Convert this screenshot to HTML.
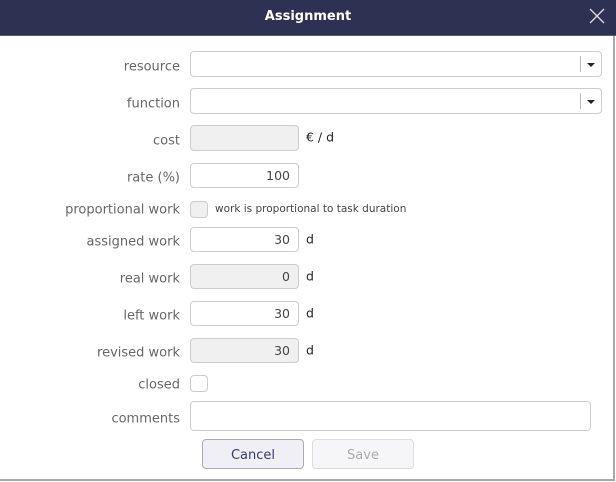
<!DOCTYPE html>
<html><head><style>
body{margin:0;width:616px;height:482px;background:#fff;font-family:"DejaVu Sans","Liberation Sans",sans-serif;position:relative;overflow:hidden}
.hdr{position:absolute;left:0;top:0;width:616px;height:35px;background:#2f3152;border-bottom:1px solid #5a5c78;}
.hdr .t{position:absolute;left:0;right:0;top:9px;text-align:center;color:#fff;font-weight:bold;font-size:13px}
.frame{position:absolute;left:0;top:36px;width:613px;height:443px;border-right:2px solid #a9a9a9;border-bottom:2px solid #a9a9a9}
.lbl{position:absolute;right:436px;font-size:13px;color:#666;white-space:nowrap;transform:translateY(-50%);margin-top:1px}
.in{position:absolute;box-sizing:border-box;border:1px solid #ccc;border-radius:4px;background:#fff;font-size:12.5px;color:#444;text-align:right;padding-right:8px}
.dis{background:#f0f0f0}
.u{position:absolute;font-size:12.5px;color:#222;transform:translateY(-50%)}
.btn{position:absolute;box-sizing:border-box;border:1px solid #bbb;border-radius:4px;text-align:center;font-size:13px;line-height:31px}
</style></head><body>
<div class="hdr"><div class="t">Assignment</div>
<svg style="position:absolute;left:589px;top:8px" width="16" height="16"><path d="M1 1L15 15M15 1L1 15" stroke="#ddd" stroke-width="1.3"/></svg></div>
<div class="frame"></div>

<div class="lbl" style="top:66px">resource</div>
<div class="in" style="left:190px;top:51px;width:412px;height:26px"></div>
<div style="position:absolute;left:580px;top:56px;width:1px;height:16px;background:#bbb"></div>
<div style="position:absolute;left:587px;top:63px;border:4px solid transparent;border-top:4px solid #222;border-bottom:0"></div>

<div class="lbl" style="top:103px">function</div>
<div class="in" style="left:190px;top:88px;width:412px;height:26px"></div>
<div style="position:absolute;left:580px;top:93px;width:1px;height:16px;background:#bbb"></div>
<div style="position:absolute;left:587px;top:100px;border:4px solid transparent;border-top:4px solid #222;border-bottom:0"></div>

<div class="lbl" style="top:140px">cost</div>
<div class="in dis" style="left:190px;top:125px;width:109px;height:26px"></div>
<div class="u" style="left:306px;top:137px">€ / d</div>

<div class="lbl" style="top:177px">rate (%)</div>
<div class="in" style="left:190px;top:163px;width:109px;height:25px;line-height:23px">100</div>

<div class="lbl" style="top:209px">proportional work</div>
<div class="in dis" style="left:190px;top:201px;width:18px;height:17px"></div>
<div class="u" style="left:215px;top:209px;font-size:10.5px;color:#444">work is proportional to task duration</div>

<div class="lbl" style="top:241px">assigned work</div>
<div class="in" style="left:190px;top:227px;width:109px;height:25px;line-height:23px">30</div>
<div class="u" style="left:306px;top:239px">d</div>

<div class="lbl" style="top:278px">real work</div>
<div class="in dis" style="left:190px;top:264px;width:109px;height:25px;line-height:23px">0</div>
<div class="u" style="left:306px;top:276px">d</div>

<div class="lbl" style="top:315px">left work</div>
<div class="in" style="left:190px;top:301px;width:109px;height:25px;line-height:23px">30</div>
<div class="u" style="left:306px;top:313px">d</div>

<div class="lbl" style="top:352px">revised work</div>
<div class="in dis" style="left:190px;top:338px;width:109px;height:25px;line-height:23px">30</div>
<div class="u" style="left:306px;top:350px">d</div>

<div class="lbl" style="top:384px">closed</div>
<div class="in" style="left:190px;top:375px;width:18px;height:17px"></div>

<div class="lbl" style="top:418px">comments</div>
<div class="in" style="left:190px;top:401px;width:401px;height:30px"></div>

<div class="btn" style="left:202px;top:439px;width:102px;height:30px;background:#efeff5;color:#3a3a6a;border-color:#aaa">Cancel</div>
<div class="btn" style="left:312px;top:439px;width:102px;height:30px;background:#f6f6f9;color:#aaa;border-color:#ddd">Save</div>
</body></html>
